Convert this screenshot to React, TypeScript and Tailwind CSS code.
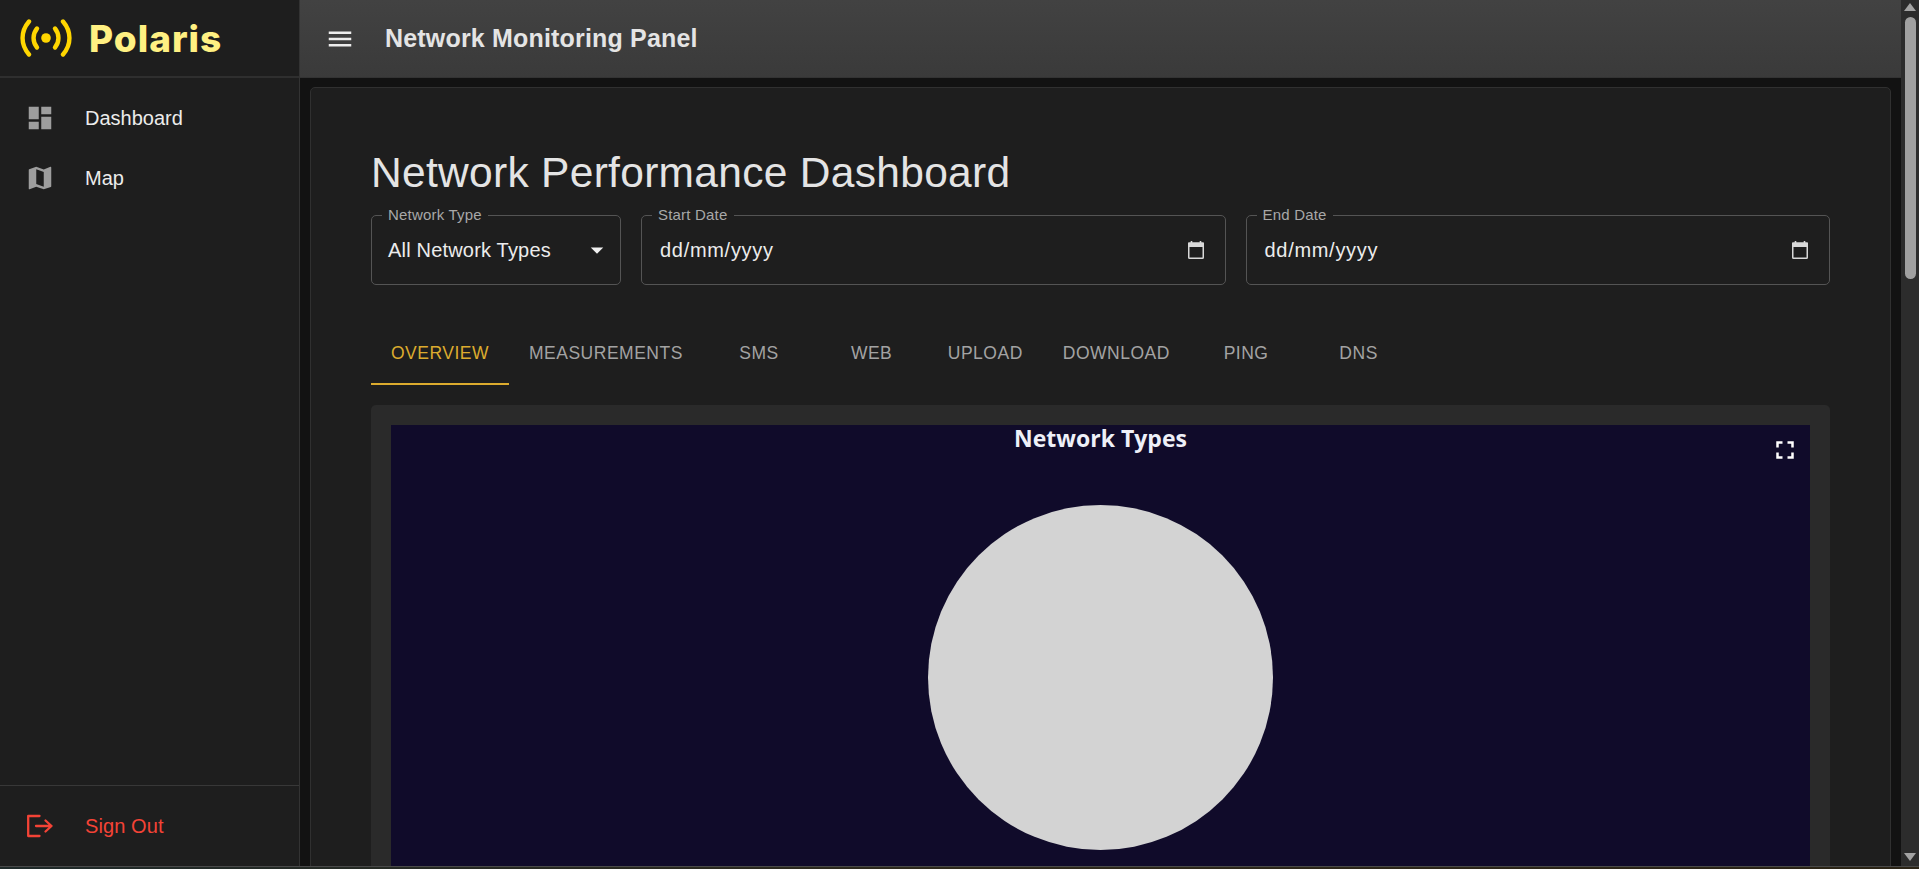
import React from "react";

const tabs = ["OVERVIEW", "MEASUREMENTS", "SMS", "WEB", "UPLOAD", "DOWNLOAD", "PING", "DNS"];

const Mui = ({ d, className }: { d: string; className?: string }) => (
  <svg viewBox="0 0 24 24" fill="currentColor" className={className}>
    <path d={d} />
  </svg>
);

const CalendarIcon = () => (
  <svg viewBox="0 0 16 18" className="w-4 h-[18px] text-[#d8d8d8]" fill="none">
    <path d="M3.500 0v3M12.500 0v3" stroke="currentColor" strokeWidth="1.600" />
    <path d="M0 1.500h16v4.500H0z" fill="currentColor" />
    <rect x="0.750" y="2.250" width="14.500" height="15" rx="0.800" stroke="currentColor" strokeWidth="1.500" />
  </svg>
);

const Field = ({ label, className, children }: { label: string; className?: string; children: React.ReactNode }) => (
  <div className={`relative h-[70px] border border-[#545454] rounded-[5px] flex items-center justify-between pl-[17px] pr-[21px] pb-[1px] text-[20px] text-[#ececec] ${className}`}>
    <span className="absolute left-[10px] -top-[10px] bg-[#1e1e1e] px-[6px] text-[15px] leading-[18px] tracking-[0.2px] text-[#a8a8a8]">{label}</span>
    {children}
  </div>
);

export default function App() {
  return (
    <div className="h-[869px] w-full overflow-hidden flex flex-col bg-[#121212] font-['Liberation_Sans',Arial,sans-serif]">
      <div className="flex-1 min-h-0 flex">
        <aside className="w-[300px] shrink-0 bg-[#1e1e1e] border-r border-[#333333] flex flex-col">
          <div className="h-[78px] shrink-0 border-b-2 border-[#2f2f2f] flex items-center pl-[20px] gap-[17px]">
            <svg viewBox="0 0 52 38" className="w-[52px] h-[38px]" fill="none" stroke="#ffd600" strokeWidth="4.400" strokeLinecap="round">
              <circle cx="26" cy="19" r="4.800" fill="#ffd600" stroke="none" />
              <path d="M17 9.500c-4.600 5.600-4.600 13.400 0 19M35 9.500c4.600 5.600 4.600 13.400 0 19" />
              <path d="M9 2.500c-8.600 10-8.600 23 0 33M43 2.500c8.600 10 8.600 23 0 33" />
            </svg>
            <span className="font-['Inter',sans-serif] font-extrabold text-[37px] leading-none tracking-[1px] text-[#fff082]">Polaris</span>
          </div>
          <nav className="pt-[10px]">
            <div className="h-[60px] flex items-center pl-[25px] gap-[30px] text-[20px] text-[#ececec]">
              <Mui className="w-[30px] h-[30px] text-[#9e9e9e]" d="M3 13h8V3H3zm0 8h8v-6H3zm10 0h8V11h-8zm0-18v6h8V3z" />
              <span>Dashboard</span>
            </div>
            <div className="h-[60px] flex items-center pl-[25px] gap-[30px] text-[20px] text-[#ececec]">
              <Mui className="w-[30px] h-[30px] text-[#9e9e9e]" d="m20.5 3-.16.03L15 5.1 9 3 3.36 4.9c-.21.07-.36.25-.36.48V20.5c0 .28.22.5.5.5l.16-.03L9 18.9l6 2.1 5.64-1.9c.21-.07.36-.25.36-.48V3.5c0-.28-.22-.5-.5-.5M15 19l-6-2.11V5l6 2.11z" />
              <span>Map</span>
            </div>
          </nav>
          <div className="mt-auto border-t border-[#383838] h-[81px] pb-[1px] flex items-center pl-[25px] gap-[30px] text-[20px] text-[#f44336]">
            <svg viewBox="0 0 30 30" className="w-[30px] h-[30px]" fill="none" stroke="currentColor" strokeWidth="2.300" strokeLinejoin="round" strokeLinecap="round">
              <path d="M14.500 5H3.200v20h11.300" />
              <path d="M11 15h15.500M20.500 9.500 26.500 15l-6 5.500" />
            </svg>
            <span className="tracking-[0.1px]">Sign Out</span>
          </div>
        </aside>

        <div className="flex-1 min-w-0 flex flex-col">
          <header className="h-[78px] shrink-0 bg-gradient-to-b from-[#424242] to-[#3a3a3a] border-b border-[#333333] flex items-center pl-[25px] gap-[30px]">
            <Mui className="w-[30px] h-[30px] text-[#ededed]" d="M3 18h18v-2H3zm0-5h18v-2H3zm0-7v2h18V6z" />
            <h1 className="text-[25px] font-bold tracking-[0.18px] text-[#e4e4e4]">Network Monitoring Panel</h1>
          </header>
          <main className="flex-1 min-h-0 px-[10px] pt-[9px] overflow-hidden">
            <div className="h-[800px] bg-[#1e1e1e] border border-[#303030] rounded-[5px] px-[60px] pt-[60px]">
              <h2 className="text-[42.5px] leading-[50px] text-[#e4e4e4] tracking-[0.3px]">Network Performance Dashboard</h2>
              <div className="flex gap-[20px] mt-[17px]">
                <Field label="Network Type" className="w-[250px] !pr-[13px]">
                  <span className="-ml-[1px] tracking-[0.19px]">All Network Types</span>
                  <Mui className="w-[30px] h-[30px] -mr-[5px] text-[#f0f0f0]" d="M7 10l5 5 5-5z" />
                </Field>
                <Field label="Start Date" className="flex-1">
                  <span className="ml-[1px] tracking-[0.7px]">dd/mm/yyyy</span>
                  <CalendarIcon />
                </Field>
                <Field label="End Date" className="flex-1">
                  <span className="ml-[1px] tracking-[0.7px]">dd/mm/yyyy</span>
                  <CalendarIcon />
                </Field>
              </div>
              <div className="flex mt-[30px] h-[70px]">
                {tabs.map((tab, i) => (
                  <div
                    key={tab}
                    className={`min-w-[112.5px] px-5 flex items-center justify-center text-[17.500px] tracking-[0.5px] pt-[8px] border-b-2 ${i === 0 ? "text-[#dcab2e] border-[#dcab2e]" : "text-[#a3a3a3] border-transparent"}`}
                  >
                    {tab}
                  </div>
                ))}
              </div>
              <div className="mt-[20px] bg-[#2a2a2a] rounded-[5px] p-[20px] pb-0">
                <div className="relative h-[600px] bg-[#100b2a] flex flex-col items-center">
                  <h3 className="font-['Open_Sans',sans-serif] font-bold text-[23px] leading-[26px] text-[#eef0f8]">Network Types</h3>
                  <Mui className="absolute top-[10px] right-[10px] w-[30px] h-[30px] text-white" d="M7 14H5v5h5v-2H7v-3zm-2-4h2V7h3V5H5v5zm12 7h-3v2h5v-5h-2v3zM14 5v2h3v3h2V5h-5z" />
                  <div className="w-[345px] h-[345px] rounded-full bg-[#d3d3d3] mt-[54px]" />
                </div>
              </div>
            </div>
          </main>
        </div>

        <div className="w-[18px] shrink-0 bg-[#2c2c2c] flex flex-col items-center py-[3px]">
          <div className="w-0 h-0 border-x-[6.5px] border-x-transparent border-b-[8px] border-b-[#a3a3a3]" />
          <div className="w-[11px] h-[262px] rounded-full bg-[#a0a0a0] mt-[6px]" />
          <div className="mt-auto mb-[2px] w-0 h-0 border-x-[6.5px] border-x-transparent border-t-[8px] border-t-[#a3a3a3]" />
        </div>
      </div>
      <div className="h-[3px] shrink-0 border-t border-[#4a4a4a] bg-gradient-to-r from-[#1f2a2a] via-[#2f2a1c] to-[#2b2416]" />
    </div>
  );
}
